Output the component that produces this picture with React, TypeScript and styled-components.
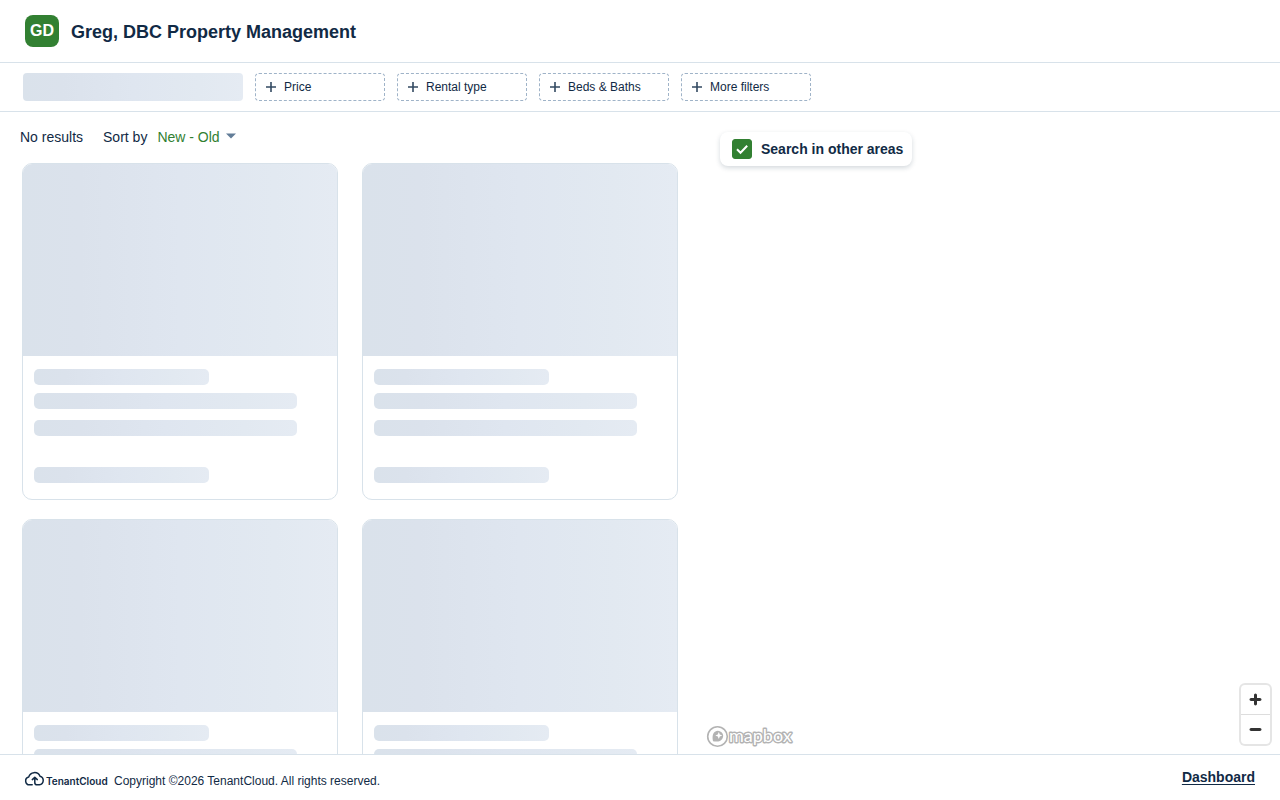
import React from "react";
import styled, { createGlobalStyle } from "styled-components";

const navy = "#112a45";
const green = "#328032";
const line = "#d8e2ea";
const shimmer = "linear-gradient(90deg, #dae2eb 0%, #dbe2ec 18%, #dfe6f0 50%, #e2e9f1 80%, #e5ebf3 100%)";

const GlobalStyle = createGlobalStyle`
  *, *::before, *::after { box-sizing: border-box; }
  body {
    margin: 0;
    background: #fff;
    color: ${navy};
    font-family: "Liberation Sans", Arial, sans-serif;
    font-size: 14px;
    line-height: 20px;
  }
  button, select, input { font: inherit; color: inherit; margin: 0; }
`;

const Page = styled.div`
  display: flex;
  flex-direction: column;
  height: 100vh;
`;

const Header = styled.header`
  display: flex;
  align-items: center;
  gap: 12px;
  padding: 15px 25px;
  border-bottom: 1px solid ${line};
`;

const Avatar = styled.div`
  width: 34px;
  height: 32px;
  border-radius: 8px;
  background: ${green};
  color: #fff;
  font-size: 16px;
  font-weight: 700;
  line-height: 32px;
  text-align: center;
`;

const Title = styled.h1`
  margin: 0;
  padding-top: 2px;
  font-size: 18px;
  line-height: 30px;
`;

const FilterBar = styled.div`
  display: flex;
  gap: 12px;
  padding: 10px 23px;
  border-bottom: 1px solid ${line};
`;

const SearchSkeleton = styled.div`
  width: 220px;
  height: 28px;
  border-radius: 4px;
  background: ${shimmer};
`;

const FilterButton = styled.button`
  display: flex;
  align-items: center;
  gap: 8px;
  width: 130px;
  height: 28px;
  padding: 0 10px;
  border: 1px dashed #9fb3c8;
  border-radius: 4px;
  background: #fff;
  font-size: 12px;
  line-height: 16px;
`;

const Main = styled.main`
  display: grid;
  grid-template-columns: minmax(0, 35fr) minmax(0, 29fr);
  flex: 1;
  min-height: 0;
`;

const Results = styled.section`
  overflow-y: auto;
  scrollbar-width: none;
`;

const ResultsBar = styled.div`
  display: flex;
  align-items: center;
  gap: 20px;
  padding: 15px 20px 16px;
`;

const SortField = styled.div`
  display: flex;
  align-items: center;
`;

const SortSelect = styled.select`
  appearance: none;
  margin-left: 10px;
  padding: 0 6px 0 0;
  border: 0;
  background: none;
  color: ${green};
`;

const CardGrid = styled.div`
  display: grid;
  grid-template-columns: repeat(2, minmax(0, 1fr));
  gap: 19px 24px;
  padding: 0 22px 20px;
`;

const Card = styled.article`
  overflow: hidden;
  border: 1px solid ${line};
  border-radius: 10px;
`;

const CardPhoto = styled.div`
  height: 192px;
  background: ${shimmer};
`;

const CardBody = styled.div`
  display: flex;
  flex-direction: column;
  padding: 13px 11px 16px;
`;

const Bar = styled.div<{ $short?: boolean; $top?: number }>`
  width: ${(p) => (p.$short ? "60%" : "90%")};
  height: 16px;
  margin-top: ${(p) => p.$top ?? 0}px;
  border-radius: 5px;
  background: ${shimmer};
`;

const MapPane = styled.section`
  position: relative;
  padding: 20px;
`;

const AreaToggle = styled.label`
  display: inline-flex;
  align-items: center;
  gap: 9px;
  padding: 7px 9px 7px 12px;
  border-radius: 8px;
  background: #fff;
  box-shadow: 0 2px 5px rgba(17, 42, 69, 0.18);
  font-weight: 700;
`;

const CheckWrap = styled.span`
  display: grid;
  width: 20px;
  height: 20px;

  > * { grid-area: 1 / 1; }
  svg { pointer-events: none; }
`;

const CheckInput = styled.input`
  appearance: none;
  width: 20px;
  height: 20px;
  border: 1px solid ${green};
  border-radius: 3px;
  background: #fff;

  &:checked { background: ${green}; }
`;

const MapLogo = styled.a`
  position: absolute;
  left: 6px;
  bottom: 6px;
  display: flex;
`;

const ZoomGroup = styled.div`
  position: absolute;
  right: 10px;
  bottom: 10px;
  display: flex;
  flex-direction: column;
  border-radius: 4px;
  background: #fff;
  box-shadow: 0 0 0 2px rgba(0, 0, 0, 0.1);
`;

const ZoomButton = styled.button`
  display: flex;
  align-items: center;
  height: 29px;
  padding: 0;
  border: 0;
  background: none;

  & + & {
    height: 30px;
    border-top: 1px solid #ddd;
  }
  svg { flex: none; }
`;

const Footer = styled.footer`
  display: flex;
  align-items: flex-start;
  justify-content: space-between;
  padding: 12px 25px 11px;
  border-top: 1px solid ${line};
`;

const Legal = styled.div`
  display: flex;
  align-items: flex-start;
  gap: 6px;
  padding-top: 4px;
  font-size: 12px;
  line-height: 16px;
`;

const Copyright = styled.span`
  padding-top: 2px;
`;

const FooterLink = styled.a`
  color: ${navy};
  font-weight: 700;
  text-underline-offset: 2px;
`;

const PlusIcon = () => (
  <svg width="10" height="10" viewBox="0 0 10 10" aria-hidden="true">
    <path d="M5 0v10M0 5h10" stroke="#334a62" strokeWidth="1.6" />
  </svg>
);

const TenantCloudLogo = () => (
  <svg width="83" height="16" viewBox="0 0 83 16" overflow="visible" role="img" aria-label="TenantCloud">
    <path
      d="M7.2 13.800H4.500A3.900 3.900 0 0 1 3.700 6.100 6 6 0 0 1 15 5.200a4.400 4.400 0 0 1-.6 8.600H12q-2.200 0-2.200-2.400V6.800M7.300 8.600l2.500-2.300L12.300 8.600"
      fill="none"
      stroke={navy}
      strokeWidth="1.5"
      strokeLinecap="round"
      strokeLinejoin="round"
    />
    <text x="21" y="14" fill={navy} fontFamily="Inter, sans-serif" fontSize="10" fontWeight="600">
      TenantCloud
    </text>
  </svg>
);

const MapboxLogo = () => (
  <svg width="90" height="24" viewBox="0 0 90 24" overflow="visible" aria-hidden="true">
    <circle cx="11.5" cy="12.5" r="9.8" fill="#fff" stroke="#b3b3b3" strokeWidth="1.6" />
    <path d="M7 17.200c-1-5.500 0-8 2-9.500a5.200 5.200 0 0 1 7.200 7.200c-1.500 2-4 3.300-9.200 2.300z" fill="#b3b3b3" />
    <path d="M12.800 7.900l1 2.500 2.500 1-2.500 1-1 2.500-1-2.500-2.500-1 2.500-1z" fill="#fff" />
    <text
      x="23"
      y="18"
      fill="#fff"
      stroke="#b3b3b3"
      strokeWidth="2.8"
      strokeLinejoin="round"
      paintOrder="stroke"
      fontFamily="Lato, sans-serif"
      fontSize="18"
      fontWeight="400"
    >
      mapbox
    </text>
  </svg>
);

const filters = ["Price", "Rental type", "Beds & Baths", "More filters"];

const ListingSkeleton = () => (
  <Card aria-busy="true">
    <CardPhoto />
    <CardBody>
      <Bar $short />
      <Bar $top={8} />
      <Bar $top={11} />
      <Bar $short $top={31} />
    </CardBody>
  </Card>
);

export default function App() {
  return (
    <>
      <GlobalStyle />
      <Page>
        <Header>
          <Avatar>GD</Avatar>
          <Title>Greg, DBC Property Management</Title>
        </Header>
        <FilterBar>
          <SearchSkeleton />
          {filters.map((name) => (
            <FilterButton key={name} type="button">
              <PlusIcon />
              {name}
            </FilterButton>
          ))}
        </FilterBar>
        <Main>
          <Results>
            <ResultsBar>
              <span>No results</span>
              <SortField>
                <label htmlFor="sort">Sort by</label>
                <SortSelect id="sort" defaultValue="new">
                  <option value="new">New - Old</option>
                </SortSelect>
                <svg width="10" height="8" viewBox="0 0 10 8" aria-hidden="true">
                  <path d="M0 .5h10L5 5.500z" fill="#627d98" />
                </svg>
              </SortField>
            </ResultsBar>
            <CardGrid>
              {[0, 1, 2, 3].map((id) => (
                <ListingSkeleton key={id} />
              ))}
            </CardGrid>
          </Results>
          <MapPane>
            <AreaToggle>
              <CheckWrap>
                <CheckInput type="checkbox" defaultChecked />
                <svg width="20" height="20" viewBox="0 0 20 20" aria-hidden="true">
                  <path d="M5 10.200l3.500 3.500 6.700-7" fill="none" stroke="#fff" strokeWidth="2" />
                </svg>
              </CheckWrap>
              Search in other areas
            </AreaToggle>
            <MapLogo href="#mapbox" aria-label="Mapbox">
              <MapboxLogo />
            </MapLogo>
            <ZoomGroup>
              <ZoomButton type="button" aria-label="Zoom in">
                <svg width="29" height="29" viewBox="0 0 29 29" fill="#333">
                  <path d="M14.5 8.500c-.75 0-1.500.75-1.500 1.500v3h-3c-.75 0-1.500.75-1.500 1.500S9.250 16 10 16h3v3c0 .75.75 1.500 1.500 1.500S16 19.750 16 19v-3h3c.75 0 1.500-.75 1.500-1.500S19.750 13 19 13h-3v-3c0-.75-.75-1.500-1.500-1.500z" />
                </svg>
              </ZoomButton>
              <ZoomButton type="button" aria-label="Zoom out">
                <svg width="29" height="29" viewBox="0 0 29 29" fill="#333">
                  <path d="M10 13c-.75 0-1.500.75-1.500 1.500S9.250 16 10 16h9c.75 0 1.500-.75 1.500-1.500S19.750 13 19 13h-9z" />
                </svg>
              </ZoomButton>
            </ZoomGroup>
          </MapPane>
        </Main>
        <Footer>
          <Legal>
            <TenantCloudLogo />
            <Copyright>Copyright ©2026 TenantCloud. All rights reserved.</Copyright>
          </Legal>
          <FooterLink href="#dashboard">Dashboard</FooterLink>
        </Footer>
      </Page>
    </>
  );
}
